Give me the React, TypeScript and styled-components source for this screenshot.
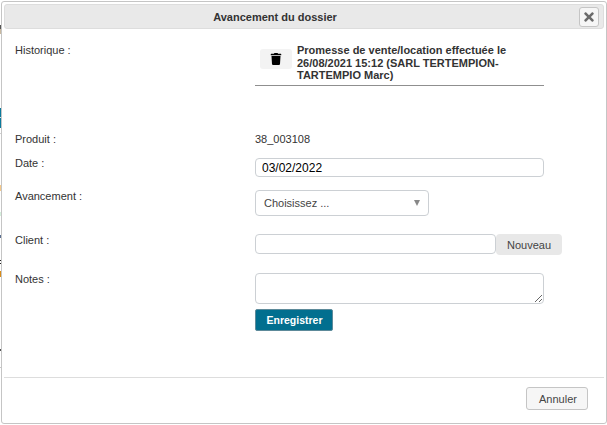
import React from "react";
import styled, { createGlobalStyle } from "styled-components";
import { FaTimes, FaTrash } from "react-icons/fa";

const GlobalStyle = createGlobalStyle`
    html, body {
        margin: 0;
        padding: 0;
        background: #ffffff;
    }

    body {
        font-family: "Liberation Sans", Arial, sans-serif;
        font-size: 11px;
        color: #333333;
    }
`

const Page = styled.div`
    width: 607px;
    height: 425px;
    display: flex;
    overflow: hidden;
`

// what is left visible of the page behind the dialog
const BackdropEdge = styled.div`
    flex: none;
    width: 1px;
    height: 425px;
    background: linear-gradient(
        to bottom,
        #ffffff 0 25px,
        #555555 25px 29px,
        #c9b9a0 29px 34px,
        #ffffff 34px 108px,
        #0b7a9c 108px 117px,
        #cfe2e8 117px 118px,
        #0b7a9c 118px 128px,
        #ffffff 128px 133px,
        #d0d0d0 133px 134px,
        #ffffff 134px 185px,
        #f5c98a 185px 191px,
        #ffffff 191px 212px,
        #d5f0dc 212px 216px,
        #ffffff 216px 235px,
        #5a6f90 235px 238px,
        #ffffff 238px 260px,
        #222222 260px 261px,
        #ffffff 261px 263px,
        #222222 263px 264px,
        #ffffff 264px 271px,
        #d98c1a 271px 277px,
        #ffffff 277px 349px,
        #555555 349px 351px,
        #ffffff 351px 367px,
        #c8c8c8 367px 368px,
        #ffffff 368px 425px
    );
`

const Dialog = styled.div`
    flex: none;
    width: 606px;
    height: 423px;
    margin-top: 1px;
    box-sizing: border-box;
    padding: 2px;
    display: flex;
    flex-direction: column;
    background: #ffffff;
    border: 1px solid #c5c5c5;
    border-radius: 3px;
`

const TitleBar = styled.div`
    position: relative;
    flex: none;
    height: 25px;
    box-sizing: border-box;
    padding-right: 58px;
    display: flex;
    align-items: center;
    justify-content: center;
    background: #e9e9e9;
    border: 1px solid #dddddd;
    border-radius: 3px;
    font-weight: 700;
`

const CloseButton = styled.button`
    position: absolute;
    top: 2px;
    right: 4px;
    width: 20px;
    height: 20px;
    padding: 0;
    display: flex;
    align-items: center;
    justify-content: center;
    background: #f6f6f6;
    border: 1px solid #c5c5c5;
    border-radius: 3px;
    color: #6b6b6b;
    font-size: 14px;
`

const Content = styled.div`
    flex: 1;
    min-height: 0;
    padding: 13px 0 0 11px;
`

const Row = styled.div<{ $height?: number }>`
    display: grid;
    grid-template-columns: 240px 1fr;
    height: ${(p) => (p.$height ? `${p.$height}px` : "auto")};
    line-height: 13px;
`

const Label = styled.div`
    padding-top: 2px;
`

const Value = styled.div`
    padding-top: 2px;
`

const Field = styled.div<{ $top?: number }>`
    padding-top: ${(p) => p.$top ?? 2}px;
`

const HistoryItem = styled.div`
    width: 289px;
    height: 41px;
    margin-top: 2px;
    display: flex;
    gap: 5px;
    border-bottom: 1px solid #8f8f8f;
`

const TrashButton = styled.div`
    flex: none;
    width: 32px;
    height: 20px;
    margin: 5px 0 0 5px;
    display: flex;
    align-items: center;
    justify-content: center;
    background: #f3f3f3;
    border-radius: 3px;
    color: #000000;
    font-size: 12px;
`

const HistoryText = styled.div`
    width: 222px;
    font-weight: 700;
    line-height: 12.5px;
`

const TextInput = styled.input<{ $width: number; $height: number }>`
    display: block;
    width: ${(p) => p.$width}px;
    height: ${(p) => p.$height}px;
    box-sizing: border-box;
    margin: 0;
    padding: 0 6px;
    font-family: inherit;
    font-size: 12px;
    color: #000000;
    background: #ffffff;
    border: 1px solid #ccd0d4;
    border-radius: 4px;
    outline: none;
`

const SelectBox = styled.div`
    width: 174px;
    height: 26px;
    box-sizing: border-box;
    padding: 0 8px;
    display: flex;
    align-items: center;
    justify-content: space-between;
    border: 1px solid #ccd0d4;
    border-radius: 4px;
    color: #444444;
`

const Caret = styled.span`
    width: 0;
    height: 0;
    border-left: 3.5px solid transparent;
    border-right: 3.5px solid transparent;
    border-top: 6px solid #888888;
`

const ClientLine = styled.div`
    display: flex;
    align-items: flex-start;
`

const NewButton = styled.button`
    width: 66px;
    height: 21px;
    padding: 0;
    font-family: inherit;
    font-size: 11px;
    color: #444444;
    background: #e8e8e8;
    border: none;
    border-radius: 4px;
`

const Notes = styled.textarea`
    display: block;
    width: 289px;
    height: 31px;
    box-sizing: border-box;
    margin: 0;
    border: 1px solid #ccd0d4;
    border-radius: 4px;
    outline: none;
`

const SaveButton = styled.button`
    display: block;
    width: 78px;
    height: 22px;
    margin-top: 5px;
    padding: 0 0 0 1px;
    font-family: inherit;
    font-size: 10.5px;
    font-weight: 700;
    color: #ffffff;
    background: #026f8f;
    border: 1px solid #5d8a9a;
    border-radius: 2px;
`

const Footer = styled.div`
    flex: none;
    height: 44px;
    box-sizing: border-box;
    padding: 9px 16px 0 0;
    display: flex;
    align-items: flex-start;
    justify-content: flex-end;
    border-top: 1px solid #dddddd;
`

const CancelButton = styled.button`
    width: 62px;
    height: 23px;
    padding: 0 0 0 2px;
    font-family: inherit;
    font-size: 11px;
    color: #454545;
    background: #f6f6f6;
    border: 1px solid #c5c5c5;
    border-radius: 3px;
`

export default function App() {
    return (
        <Page>
            <GlobalStyle />
            <BackdropEdge />
            <Dialog>
                <TitleBar>
                    Avancement du dossier
                    <CloseButton aria-label="Fermer">
                        <FaTimes />
                    </CloseButton>
                </TitleBar>
                <Content>
                    <Row $height={89}>
                        <Label>Historique :</Label>
                        <HistoryItem>
                            <TrashButton><FaTrash /></TrashButton>
                            <HistoryText>Promesse de vente/location effectuée le 26/08/2021 15:12 (SARL TERTEMPION-TARTEMPIO Marc)</HistoryText>
                        </HistoryItem>
                    </Row>
                    <Row $height={24}>
                        <Label>Produit :</Label>
                        <Value>38_003108</Value>
                    </Row>
                    <Row $height={33}>
                        <Label>Date :</Label>
                        <Field $top={3}>
                            <TextInput $width={289} $height={19} defaultValue="03/02/2022" />
                        </Field>
                    </Row>
                    <Row $height={44}>
                        <Label>Avancement :</Label>
                        <Field>
                            <SelectBox>
                                Choisissez ...
                                <Caret />
                            </SelectBox>
                        </Field>
                    </Row>
                    <Row $height={39}>
                        <Label>Client :</Label>
                        <Field>
                            <ClientLine>
                                <TextInput $width={241} $height={20} />
                                <NewButton>Nouveau</NewButton>
                            </ClientLine>
                        </Field>
                    </Row>
                    <Row>
                        <Label>Notes :</Label>
                        <Field>
                            <Notes />
                            <SaveButton>Enregistrer</SaveButton>
                        </Field>
                    </Row>
                </Content>
                <Footer>
                    <CancelButton>Annuler</CancelButton>
                </Footer>
            </Dialog>
        </Page>
    );
}
